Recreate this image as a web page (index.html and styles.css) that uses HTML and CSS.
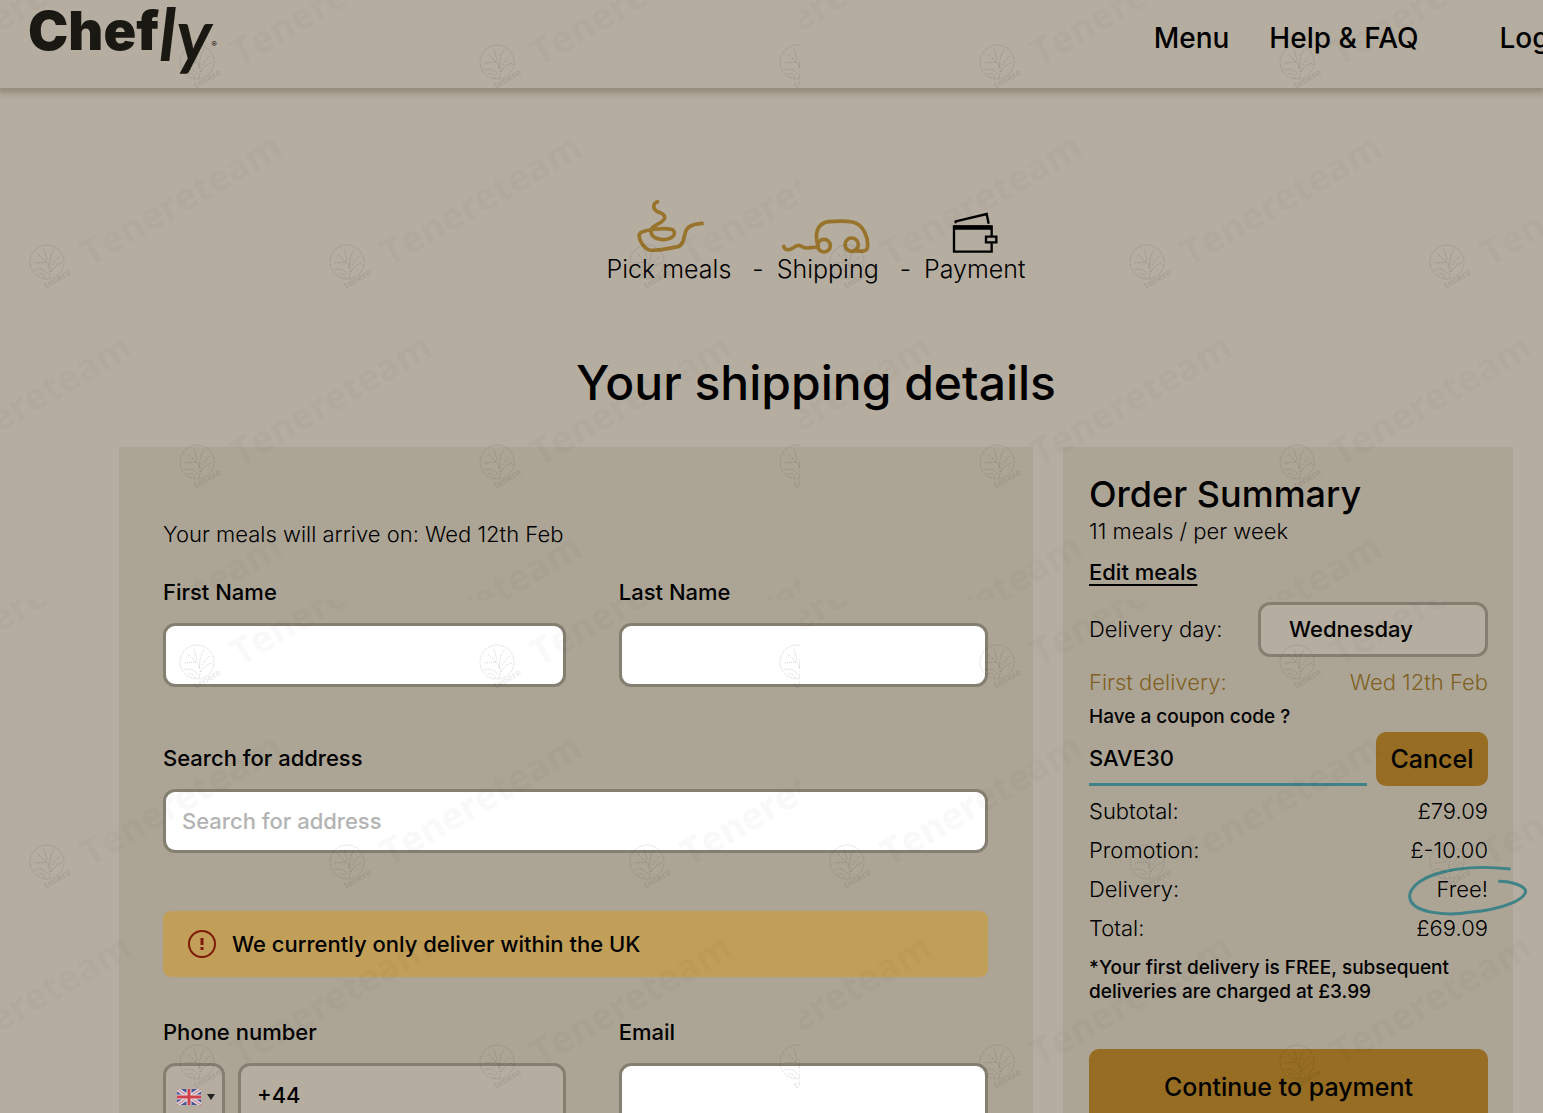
FILE: index.html
```html
<!DOCTYPE html>
<html lang="en">
<head>
  <meta charset="UTF-8" />
  <meta name="viewport" content="width=device-width, initial-scale=1.0"/>
  <title>Chefly - Your shipping details</title>
  <link rel="stylesheet" href="styles.css">
</head>
<body>
  <header class="site-header">
    <a href="#" class="logo"><span class="logo-chef">Chef</span><span class="logo-ly">ly</span><span class="logo-mark">®</span></a>
    <nav class="nav">
      <a href="#">Menu</a>
      <a href="#">Help &amp; FAQ</a>
      <a href="#" class="nav-login">Log in</a>
    </nav>
  </header>

  <main class="checkout">
    <ol class="steps">
      <li class="step step-done">
        <svg width="74" height="57" viewBox="124 50 222 171" fill="none" stroke="currentColor" stroke-width="11" stroke-linejoin="round">
          <path d="M205 63C192 65 186 74 191 85C197 99 223 95 222 112C220 130 183 133 181 150C179 174 209 181 231 176C254 170 258 152 241 147C217 142 166 148 150 157C136 170 161 205 176 209C205 213 241 202 262 199C282 194 278 166 287 149C296 132 318 131 339 129"/>
        </svg>
        <span>Pick meals</span>
      </li>
      <li class="step-dash" aria-hidden="true">-</li>
      <li class="step step-done">
        <svg width="92" height="37" viewBox="572 110 276 111" fill="none" stroke="currentColor" stroke-width="11" stroke-linejoin="round">
          <path d="M575 194C580 212 594 211 606 202C620 191 625 195 636 201C649 207 661 199 681 200C669 163 675 129 712 124C738 122 765 122 784 125C816 132 833 172 828 204C824 217 802 212 785 211"/>
          <circle cx="698" cy="196" r="19"/>
          <circle cx="781" cy="193" r="20"/>
        </svg>
        <span>Shipping</span>
      </li>
      <li class="step-dash" aria-hidden="true">-</li>
      <li class="step">
        <svg width="46" height="42" viewBox="1081 96 138 126" fill="none" stroke="currentColor" stroke-width="7">
          <path d="M1092 130V124L1185 102L1191 131"/>
          <path d="M1200 168V139H1087V215H1200V189"/>
          <path d="M1087 143H1200" stroke-width="13"/>
          <path d="M1183 170H1214V187H1183Z"/>
        </svg>
        <span>Payment</span>
      </li>
    </ol>

    <h1 class="title">Your shipping details</h1>

    <div class="panels">
      <form class="panel details">
        <p class="arrival">Your meals will arrive on: Wed 12th Feb</p>

        <div class="field-row">
          <div class="field">
            <label for="firstName">First Name</label>
            <input type="text" id="firstName" class="input">
          </div>
          <div class="field">
            <label for="lastName">Last Name</label>
            <input type="text" id="lastName" class="input">
          </div>
        </div>

        <div class="field">
          <label for="address">Search for address</label>
          <input type="text" id="address" class="input" placeholder="Search for address">
        </div>

        <div class="alert">
          <svg width="28" height="28" viewBox="0 0 28 28" fill="none" stroke="currentColor">
            <circle cx="14" cy="14" r="13" stroke-width="2"/>
            <path d="M14 8V15M14 17V20" stroke-width="3"/>
          </svg>
          We currently only deliver within the UK
        </div>

        <div class="field-row">
          <div class="field">
            <label for="phone">Phone number</label>
            <div class="phone">
              <button type="button" class="input country" aria-label="Country code">
                <svg width="24" height="16" viewBox="0 0 24 16">
                  <rect width="24" height="16" fill="#4a5296"/>
                  <path d="M0 0L24 16M24 0L0 16" stroke="#dcd7dc" stroke-width="4"/>
                  <path d="M0 0L24 16M24 0L0 16" stroke="#cc6a74" stroke-width="1"/>
                  <path d="M12 0V16M0 8H24" stroke="#e4dfe0" stroke-width="5"/>
                  <path d="M12 0V16M0 8H24" stroke="#d0404c" stroke-width="3"/>
                </svg>
                <svg width="8" height="6" viewBox="0 0 8 6"><path d="M0 0H8L4 6Z" fill="#222"/></svg>
              </button>
              <input type="tel" id="phone" class="input input-tel" value="+44">
            </div>
          </div>
          <div class="field">
            <label for="email">Email</label>
            <input type="email" id="email" class="input">
          </div>
        </div>
      </form>

      <aside class="panel summary">
        <h2>Order Summary</h2>
        <p class="meals">11 meals / per week</p>
        <a href="#" class="edit">Edit meals</a>

        <div class="line line-day">
          <label for="deliveryDay">Delivery day:</label>
          <select id="deliveryDay" class="day-select">
            <option>Wednesday</option>
          </select>
        </div>
        <div class="line line-first"><span>First delivery:</span><span>Wed 12th Feb</span></div>

        <label for="coupon" class="coupon-label">Have a coupon code ?</label>
        <div class="coupon">
          <input type="text" id="coupon" value="SAVE30">
          <button type="button" class="btn btn-cancel">Cancel</button>
        </div>

        <div class="line"><span>Subtotal:</span><span>£79.09</span></div>
        <div class="line"><span>Promotion:</span><span>£-10.00</span></div>
        <div class="line">
          <span>Delivery:</span>
          <span class="free">Free!
            <svg width="120" height="51" viewBox="1044 493 360 153" fill="none" stroke="#3f8287" stroke-width="9">
              <path d="M1352 505C1160 484 1048 538 1049 588C1052 638 1158 646 1230 635C1334 625 1394 596 1397 572C1394 554 1355 543 1315 542"/>
            </svg>
          </span>
        </div>
        <div class="line"><span>Total:</span><span>£69.09</span></div>

        <p class="note">*Your first delivery is FREE, subsequent deliveries are charged at £3.99</p>
        <button type="button" class="btn btn-continue">Continue to payment</button>
      </aside>
    </div>
  </main>

  <!-- watermark, repeated over the whole page -->
  <svg class="watermark" aria-hidden="true">
    <defs>
      <g id="mark">
        <g fill="none" stroke="#000" stroke-opacity=".16" stroke-width="1" stroke-dasharray="1 1">
          <circle r="17"/>
          <path d="M2 16C4 8 4 4-2-1L-9-8M2 6C3-2 3-8 8-13M4 10C7 4 11 2 15 1M-1 0L-12 1M0-2L-3-13M5 3L12-6M0 12C-3 7-8 6-13 8M-2 16C-3 12-6 11-9 12"/>
        </g>
        <text class="mark-small" transform="translate(-1 27) rotate(-30)">tenere</text>
        <text class="mark-text" transform="translate(43 5) rotate(-30)">Tenereteam</text>
      </g>
      <pattern id="marks" width="800" height="600" patternUnits="userSpaceOnUse">
        <use href="#mark" x="-103" y="62"/>
        <use href="#mark" x="197" y="62"/>
        <use href="#mark" x="497" y="62"/>
        <use href="#mark" x="797" y="62"/>
        <use href="#mark" x="47" y="262"/>
        <use href="#mark" x="347" y="262"/>
        <use href="#mark" x="647" y="262"/>
        <use href="#mark" x="-103" y="462"/>
        <use href="#mark" x="197" y="462"/>
        <use href="#mark" x="497" y="462"/>
        <use href="#mark" x="797" y="462"/>
        <use href="#mark" x="47" y="662"/>
        <use href="#mark" x="347" y="662"/>
        <use href="#mark" x="647" y="662"/>
      </pattern>
    </defs>
    <rect width="100%" height="100%" fill="url(#marks)"/>
  </svg>
</body>
</html>
```

FILE: styles.css
```css
:root {
  --bg: #b5ad9f;
  --panel: #aca596;
  --border: #857f72;
  --gold: #966d22;
  --teal: #3f8287;
}

* {
  box-sizing: border-box;
  margin: 0;
  padding: 0;
}

body {
  font-family: Inter, 'Liberation Sans', sans-serif;
  font-size: 22px;
  line-height: 30px;
  font-weight: 500;
  color: #000;
  background: var(--bg);
  overflow-x: hidden;
}

a {
  color: inherit;
  text-decoration: none;
}

input,
select,
button {
  font: inherit;
  color: inherit;
}

/* header */
.site-header {
  display: flex;
  justify-content: space-between;
  height: 88px;
  padding-left: 28px;
  box-shadow: 0 3px 6px 2px rgba(60, 50, 35, 0.28);
}

.logo {
  display: flex;
  align-items: flex-start;
  color: #1a1812;
  line-height: 62px;
}

.logo-chef {
  font-weight: 900;
  font-size: 54px;
}

.logo-ly {
  font-family: Lato, sans-serif;
  font-style: italic;
  font-weight: 700;
  font-size: 72px;
  line-height: 66px;
}

.logo-mark {
  font-size: 8px;
  line-height: 88px;
}

.nav {
  display: flex;
  gap: 40px;
  margin-right: -38px;
  font-size: 28px;
  line-height: 76px;
  white-space: nowrap;
}

.nav-login {
  margin-left: 41px;
}

/* steps */
.checkout {
  padding: 109px 30px 0 119px;
}

.steps {
  display: flex;
  justify-content: center;
  align-items: flex-end;
  list-style: none;
  font-size: 25px;
  font-weight: 300;
}

.step {
  display: flex;
  flex-direction: column;
  align-items: center;
}

.step-done svg {
  color: #98732b;
}

.step-dash {
  padding: 0 13px 0 21px;
}

.title {
  margin: 67px 0 32px;
  font-size: 48px;
  line-height: 64px;
  font-weight: 500;
  text-align: center;
}

/* panels */
.panels {
  display: grid;
  grid-template-columns: 1fr 450px;
  gap: 30px;
}

.panel {
  background: var(--panel);
}

.details {
  padding: 72px 45px 40px 44px;
}

.arrival {
  margin-bottom: 28px;
  font-weight: 300;
}

.field-row {
  display: grid;
  grid-template-columns: 12fr 11fr;
  gap: 53px;
}

.field {
  display: flex;
  flex-direction: column;
  gap: 16px;
  min-width: 0;
  margin-bottom: 56px;
}

.input {
  width: 100%;
  height: 64px;
  padding: 0 16px;
  border: 3px solid var(--border);
  border-radius: 12px;
  background: #fff;
}

.input::placeholder {
  color: #b3b3b3;
  opacity: 1;
}

.phone {
  display: flex;
  gap: 13px;
}

.country {
  display: flex;
  align-items: center;
  justify-content: center;
  flex: none;
  gap: 6px;
  width: 62px;
  padding: 4px 0 0 4px;
  background: var(--bg);
}

.input-tel {
  background: var(--bg);
}

.alert {
  display: flex;
  align-items: center;
  gap: 16px;
  height: 66px;
  margin: 58px 0 40px;
  padding-left: 25px;
  border-radius: 8px;
  background: #c29f58;
}

.field:has(+ .alert) {
  margin-bottom: 0;
}

.alert svg {
  color: #7d1a08;
}

/* summary */
.summary {
  padding: 26px 25px 40px 26px;
}

.summary h2 {
  font-size: 36px;
  line-height: 43px;
  font-weight: 500;
}

.meals {
  font-weight: 300;
}

.edit {
  display: inline-block;
  margin: 11px 0 15px;
  text-decoration: underline;
  text-decoration-thickness: 2px;
  text-underline-offset: 4px;
}

.line {
  display: flex;
  justify-content: space-between;
  align-items: center;
  font-weight: 300;
  line-height: 39px;
}

.line-first {
  color: #80601f;
}

.day-select {
  width: 230px;
  height: 55px;
  padding-left: 28px;
  border: 3px solid var(--border);
  border-radius: 12px;
  background: var(--bg);
  font-weight: 500;
  appearance: none;
}

.line-day {
  margin-bottom: 6px;
}

.coupon-label {
  display: block;
  font-size: 19px;
}

.coupon {
  display: flex;
  gap: 9px;
  margin-bottom: 6px;
}

.coupon input {
  flex: 1;
  min-width: 0;
  height: 54px;
  border: 0;
  border-bottom: 3px solid var(--teal);
  background: none;
}

.btn {
  border: 0;
  border-radius: 10px;
  background: var(--gold);
  font-size: 25px;
}

.btn-cancel {
  width: 112px;
  height: 54px;
}

.free {
  position: relative;
}

.free svg {
  position: absolute;
  top: -5px;
  right: -40px;
}

.note {
  margin: 8px 0 45px;
  font-size: 19px;
  line-height: 24px;
}

.btn-continue {
  width: 100%;
  height: 75px;
}

/* watermark */
.watermark {
  position: absolute;
  inset: 0;
  width: 100%;
  height: 100%;
  pointer-events: none;
}

.mark-text {
  font: 700 37px 'Open Sans', sans-serif;
  fill: #000;
  fill-opacity: 0.025;
}

.mark-small {
  font: 700 9px 'Open Sans', sans-serif;
  fill: #000;
  fill-opacity: 0.08;
}
```
